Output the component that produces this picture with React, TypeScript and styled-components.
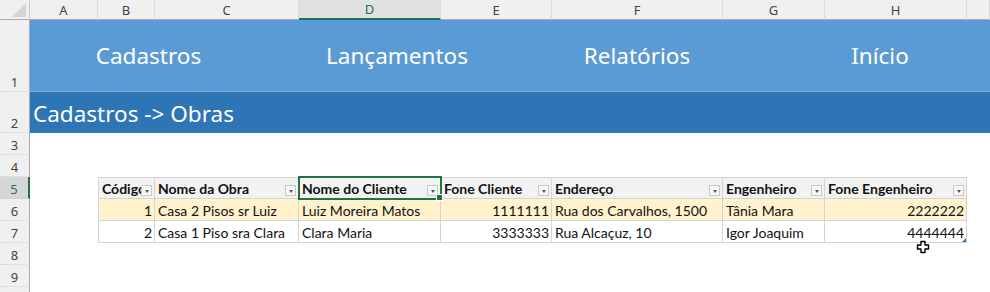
import { Fragment } from 'react';
import styled, { createGlobalStyle, css } from 'styled-components';

const GlobalStyle = createGlobalStyle`
  html, body {
    margin: 0;
    padding: 0;
    background: #ffffff;
    overflow: hidden;
  }
`;

const COLS = [68, 57, 144, 142, 111, 171, 102, 142];
const LETTERS = ['A', 'B', 'C', 'D', 'E', 'F', 'G', 'H'];
const ROW_HEIGHTS = [72, 41, 22, 22, 22, 22, 22, 22, 22, 22];

// Sheet grid: row-header column + 8 lettered columns + the rest
const Sheet = styled.div`
  position: relative;
  width: 990px;
  height: 292px;
  overflow: hidden;
  display: grid;
  grid-template-columns: 30px ${COLS.map((c) => `${c}px`).join(' ')} 1fr;
  grid-template-rows: 20px ${ROW_HEIGHTS.map((r) => `${r}px`).join(' ')};
  font-family: 'Lato', 'Open Sans', sans-serif;
`;

const Corner = styled.div`
  background: #f0f0f0;
  border-right: 1px solid #c8c8c8;
  border-bottom: 1px solid #ababab;
  display: flex;
  align-items: flex-end;
  justify-content: flex-end;
  padding: 0 3px 2px 0;
  box-sizing: border-box;
`;

const CornerTriangle = styled.div`
  width: 0;
  height: 0;
  border-left: 14px solid transparent;
  border-bottom: 14px solid #d4d4d4;
`;

const ColHeader = styled.div<{ $active?: boolean }>`
  box-sizing: border-box;
  display: flex;
  align-items: center;
  justify-content: center;
  font-family: 'Noto Sans', 'Open Sans', sans-serif;
  font-size: 13px;
  color: #444444;
  background: #f0f0f0;
  border-right: 1px solid #dadada;
  border-bottom: 1px solid #ababab;
  ${(p) =>
    p.$active &&
    css`
      background: #e1e1e1;
      color: #217346;
      border-bottom: 2px solid #217346;
    `}
`;

const RowHeader = styled.div<{ $active?: boolean }>`
  box-sizing: border-box;
  display: flex;
  align-items: flex-end;
  justify-content: center;
  padding-bottom: 0;
  font-family: 'Noto Sans', 'Open Sans', sans-serif;
  font-size: 13px;
  color: #444444;
  background: #f0f0f0;
  border-right: 1px solid #ababab;
  border-bottom: 1px dotted #cfcfcf;
  ${(p) =>
    p.$active &&
    css`
      background: #d6d6d6;
      color: #217346;
      border-right: 2px solid #217346;
    `}
`;

const MenuBand = styled.div`
  grid-column: 2 / -1;
  background: #5b9bd5;
  border-bottom: 1px solid #76acdc;
  display: grid;
  grid-template-columns: 237px 260px 220px 266px;
  align-items: center;
`;

const MenuItem = styled.div`
  text-align: center;
  color: #ffffff;
  font-family: 'Noto Sans', 'Open Sans', sans-serif;
  font-size: 22.5px;
  padding-bottom: 1px;
`;

const TitleBand = styled.div`
  grid-column: 2 / -1;
  background: #2e75b6;
  color: #ffffff;
  font-family: 'Noto Sans', 'Open Sans', sans-serif;
  font-size: 22.5px;
  display: flex;
  align-items: center;
  padding: 2px 0 0 3px;
  box-sizing: border-box;
`;

const Blank = styled.div<{ $span?: number }>`
  grid-column: span ${(p) => p.$span ?? 1};
`;

type CellKind = 'head' | 'band' | 'plain';

const Cell = styled.div<{ $kind: CellKind; $right?: boolean; $selected?: boolean; $first?: boolean; $last?: boolean }>`
  position: relative;
  box-sizing: border-box;
  display: flex;
  align-items: center;
  justify-content: ${(p) => (p.$right ? 'flex-end' : 'flex-start')};
  padding: 1px 2px 0 3px;
  font-size: 14px;
  color: #111111;
  white-space: nowrap;
  overflow: hidden;
  border-right: 1px solid #d4d4d4;
  border-bottom: 1px solid #d4d4d4;
  ${(p) => p.$first && css`border-left: 1px solid #d4d4d4;`}
  ${(p) =>
    p.$kind === 'head' &&
    css`
      background: #f2f2f2;
      font-weight: 700;
      border-top: 1px solid #d4d4d4;
    `}
  ${(p) => p.$kind === 'band' && css`background: #fff2cc;`}
  ${(p) => p.$kind === 'plain' && css`background: #ffffff;`}
  ${(p) =>
    p.$selected &&
    css`
      overflow: visible;
      outline: 2px solid #217346;
      outline-offset: -1px;
      z-index: 2;
      &::after {
        content: '';
        position: absolute;
        right: -3px;
        bottom: -3px;
        width: 5px;
        height: 5px;
        background: #217346;
        border: 1px solid #ffffff;
      }
    `}
  ${(p) =>
    p.$last &&
    css`
      overflow: visible;
      &::after {
        content: '';
        position: absolute;
        right: 0;
        bottom: 0;
        width: 0;
        height: 0;
        border-left: 4px solid transparent;
        border-bottom: 4px solid #2e75b6;
      }
    `}
`;

// dropdown arrow that sits over the header text, like Excel's autofilter button
const FilterButton = styled.span`
  position: absolute;
  right: 2px;
  bottom: 2px;
  width: 11px;
  height: 11px;
  box-sizing: border-box;
  border: 1px solid #c9c9c9;
  background: #f8f8f8;
  display: flex;
  align-items: center;
  justify-content: center;
  &::before {
    content: '';
    width: 0;
    height: 0;
    margin-top: 2px;
    border-left: 2.5px solid transparent;
    border-right: 2.5px solid transparent;
    border-top: 3px solid #555555;
  }
`;

const Cursor = styled.svg`
  position: absolute;
  left: 916px;
  top: 240px;
  z-index: 3;
`;

const headers = ['Código', 'Nome da Obra', 'Nome do Cliente', 'Fone Cliente', 'Endereço', 'Engenheiro', 'Fone Engenheiro'];
const rightCols = [0, 3, 6];
const rows = [
  ['1', 'Casa 2 Pisos sr Luiz', 'Luiz Moreira Matos', '1111111', 'Rua dos Carvalhos, 1500', 'Tânia Mara', '2222222'],
  ['2', 'Casa 1 Piso sra Clara', 'Clara Maria', '3333333', 'Rua Alcaçuz, 10', 'Igor Joaquim', '4444444'],
];

export default function App() {
  return (
    <>
      <GlobalStyle />
      <Sheet>
        <Corner>
          <CornerTriangle />
        </Corner>
        {LETTERS.map((l) => (
          <ColHeader key={l} $active={l === 'D'}>
            {l}
          </ColHeader>
        ))}
        <ColHeader />

        <RowHeader>1</RowHeader>
        <MenuBand>
          <MenuItem>Cadastros</MenuItem>
          <MenuItem>Lançamentos</MenuItem>
          <MenuItem>Relatórios</MenuItem>
          <MenuItem>Início</MenuItem>
        </MenuBand>

        <RowHeader>2</RowHeader>
        <TitleBand>Cadastros -&gt; Obras</TitleBand>

        <RowHeader>3</RowHeader>
        <Blank $span={9} />
        <RowHeader>4</RowHeader>
        <Blank $span={9} />

        <RowHeader $active>5</RowHeader>
        <Blank />
        {headers.map((h, i) => (
          <Cell key={h} $kind="head" $first={i === 0} $selected={i === 2}>
            {h}
            <FilterButton />
          </Cell>
        ))}
        <Blank />

        {rows.map((r, ri) => (
          <Fragment key={ri}>
            <RowHeader>{ri + 6}</RowHeader>
            <Blank />
            {r.map((v, ci) => (
              <Cell
                key={ci}
                $kind={ri === 0 ? 'band' : 'plain'}
                $right={rightCols.includes(ci)}
                $first={ci === 0}
                $last={ri === rows.length - 1 && ci === r.length - 1}
              >
                {v}
              </Cell>
            ))}
            <Blank />
          </Fragment>
        ))}

        <RowHeader>8</RowHeader>
        <Blank $span={9} />
        <RowHeader>9</RowHeader>
        <Blank $span={9} />
        <RowHeader />
        <Blank $span={9} />

        <Cursor width="14" height="14" viewBox="0 0 14 14">
          <path
            d="M5 1.5h4v3.5h3.5v4H9v3.5H5V9H1.5V5H5z"
            fill="#ffffff"
            stroke="#000000"
            strokeWidth="1.4"
            strokeLinejoin="round"
          />
        </Cursor>
      </Sheet>
    </>
  );
}
